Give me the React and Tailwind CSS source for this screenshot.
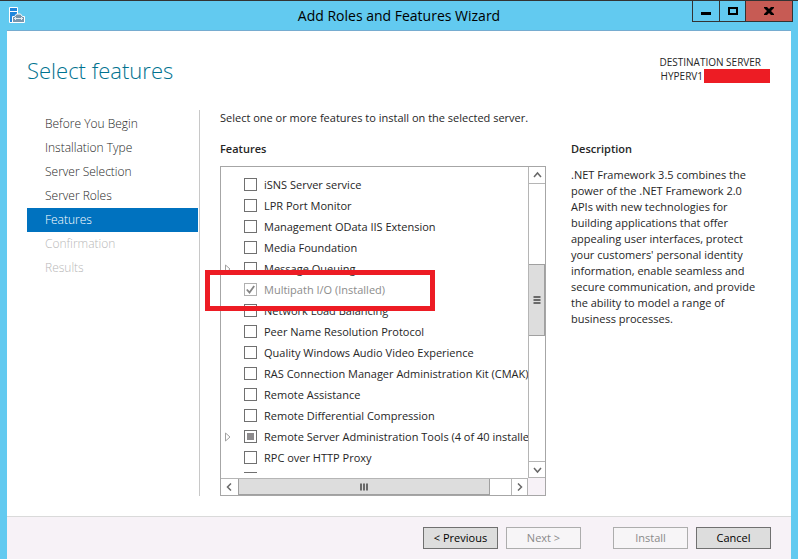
import { useState } from "react";

const STEPS = [
  { name: "Before You Begin" },
  { name: "Installation Type" },
  { name: "Server Selection" },
  { name: "Server Roles" },
  { name: "Features", current: true },
  { name: "Confirmation", disabled: true },
  { name: "Results", disabled: true },
];

const FEATURES = [
  { name: "iSNS Server service" },
  { name: "LPR Port Monitor" },
  { name: "Management OData IIS Extension" },
  { name: "Media Foundation" },
  { name: "Message Queuing", expandable: true },
  { name: "Multipath I/O (Installed)", installed: true },
  { name: "Network Load Balancing" },
  { name: "Peer Name Resolution Protocol" },
  { name: "Quality Windows Audio Video Experience" },
  { name: "RAS Connection Manager Administration Kit (CMAK)" },
  { name: "Remote Assistance" },
  { name: "Remote Differential Compression" },
  {
    name: "Remote Server Administration Tools (4 of 40 installed)",
    expandable: true,
    partial: true,
  },
  { name: "RPC over HTTP Proxy" },
  { name: "Simple TCP/IP Services" },
];

export default function App() {
  return (
    <div className="flex min-h-screen flex-col border-t border-[#333333] bg-[#62caf0] font-['Open_Sans',sans-serif] text-[11px] leading-4 text-[#262626]">
      <TitleBar />
      <div className="mx-[7px] flex flex-1 flex-col border-t border-[#76acd0] bg-white">
        <header className="flex items-start justify-between pt-[23px] pr-[30px] pl-5">
          <h1 className="text-[22px] leading-8 font-light text-[#00728f]">
            Select features
          </h1>
          <div className="pt-px text-right text-[10px] leading-[14px]">
            <p>DESTINATION SERVER</p>
            <p className="relative pr-[58px]">
              HYPERV1
              <span className="absolute top-0 -right-[9px] h-3.5 w-[66px] bg-[#ed1c24]" />
            </p>
          </div>
        </header>

        <main className="flex flex-1 pt-6 pr-5 pb-5 pl-5">
          <StepList />
          <section className="w-[347px] shrink-0 border-l border-[#c8c8c8] pl-5">
            <p className="whitespace-nowrap">
              Select one or more features to install on the selected server.
            </p>
            <h2 className="mt-[15px] mb-[9px] font-semibold">Features</h2>
            <FeatureTree />
          </section>
          <section className="min-w-0 flex-1 pt-[31px] pr-1.5 pl-[25px]">
            <h2 className="font-semibold">Description</h2>
            <p className="mt-[10px]">
              .NET Framework 3.5 combines the power of the .NET Framework 2.0
              APIs with new technologies for building applications that offer
              appealing user interfaces, protect your customers' personal
              identity information, enable seamless and secure communication,
              and provide the ability to model a range of business processes.
            </p>
          </section>
        </main>

        <footer className="flex justify-end gap-8 border-t border-[#dadada] bg-[#f7f2f7] px-5 py-[10px]">
          <div className="flex gap-2">
            <WizardButton>&lt; Previous</WizardButton>
            <WizardButton disabled>Next &gt;</WizardButton>
          </div>
          <div className="flex gap-2">
            <WizardButton disabled>Install</WizardButton>
            <WizardButton>Cancel</WizardButton>
          </div>
        </footer>
      </div>
    </div>
  );
}

function TitleBar() {
  return (
    <div className="grid h-[29px] grid-cols-[1fr_auto_1fr] items-start px-[5px]">
      <ServerIcon />
      <span className="text-sm leading-[29px] text-black">
        Add Roles and Features Wizard
      </span>
      <div className="flex h-[21px] justify-self-end border border-t-0 border-[#333333]">
        <button
          type="button"
          aria-label="Minimize"
          className="grid w-[27px] place-items-center border-r border-[#333333]"
        >
          <svg width="10" height="10" viewBox="0 0 10 10">
            <path d="M0 6h10v3H0z" />
          </svg>
        </button>
        <button
          type="button"
          aria-label="Maximize"
          className="grid w-[26px] place-items-center border-r border-[#333333]"
        >
          <svg width="10" height="8" viewBox="0 0 10 8" fill="none">
            <path d="M1 1h8v6H1z" stroke="#000" strokeWidth="2" />
          </svg>
        </button>
        <button
          type="button"
          aria-label="Close"
          className="grid w-[46px] place-items-center bg-[#c75b54]"
        >
          <svg width="10" height="8" viewBox="0 0 10 8">
            <path d="M0 0h3l2 2 2-2h3v1L7 4l3 3v1H7L5 6 3 8H0V7l3-3-3-3z" />
          </svg>
        </button>
      </div>
    </div>
  );
}

function StepList() {
  return (
    <nav className="w-[172px] shrink-0 pt-0.5 pr-px">
      {STEPS.map((step) => (
        <a
          key={step.name}
          href="#"
          aria-current={step.current ? "step" : undefined}
          aria-disabled={step.disabled}
          className={
            step.current
              ? "block bg-[#0072bf] pl-[18px] text-xs leading-6 font-light text-white"
              : step.disabled
                ? "block pl-[18px] text-xs leading-6 font-light text-[#b8b8b8]"
                : "block pl-[18px] text-xs leading-6 font-light"
          }
        >
          {step.name}
        </a>
      ))}
    </nav>
  );
}

function FeatureTree() {
  return (
    <div className="relative grid grid-cols-[minmax(0,1fr)_17px] border border-[#a6a6a6]">
      <ul className="h-[311px] overflow-hidden border-b-[5px] border-white pt-[7px]">
        {FEATURES.map((feature) => (
          <FeatureRow key={feature.name} feature={feature} />
        ))}
      </ul>

      <div className="flex flex-col border-l border-[#b5b5b5]">
        <ScrollButton label="Scroll up" className="h-[17px] border-b">
          <path d="M1 6l3.5-4L8 6" />
        </ScrollButton>
        <div className="h-20" />
        <div className="grid h-[72px] place-items-center border border-l-0 border-[#a0a0a0] bg-[#dddddd]">
          <Grip />
        </div>
        <div className="flex-1" />
        <ScrollButton label="Scroll down" className="h-[17px] border-y">
          <path d="M1 2l3.5 4L8 2" />
        </ScrollButton>
      </div>

      <div className="flex h-[17px] border-t border-[#b5b5b5]">
        <ScrollButton label="Scroll left" className="w-[17px]">
          <path d="M6 0.5L2.5 4 6 7.5" />
        </ScrollButton>
        <div className="grid w-[252px] place-items-center border border-t-0 border-[#a0a0a0] bg-[#dddddd]">
          <Grip vertical />
        </div>
        <div className="flex-1" />
        <ScrollButton label="Scroll right" className="w-[17px] border-x">
          <path d="M3 0.5L6.5 4 3 7.5" />
        </ScrollButton>
      </div>
      <div className="bg-[#f7f2f7]" />

      {/* callout around the installed feature */}
      <div className="pointer-events-none absolute top-[103px] -left-4 h-[41px] w-[230px] border-5 border-[#ed1c24]" />
    </div>
  );
}

function FeatureRow({ feature }) {
  const [checked, setChecked] = useState(Boolean(feature.installed));

  return (
    <li className="flex h-[21px] items-center pl-1">
      <span className="w-[19px] shrink-0">
        {feature.expandable && (
          <button
            type="button"
            aria-label={`Expand ${feature.name}`}
            className="block"
          >
            <svg width="6" height="10" viewBox="0 0 6 10" fill="none">
              <path d="M0.5 1v8l4.5-4z" stroke="#a0a0a0" />
            </svg>
          </button>
        )}
      </span>
      <label
        className={
          feature.installed
            ? "flex items-center gap-[7px] whitespace-nowrap text-[#8c8c8c]"
            : "flex items-center gap-[7px] whitespace-nowrap"
        }
      >
        <span className="grid shrink-0 place-items-center">
          <input
            type="checkbox"
            checked={checked}
            disabled={feature.installed}
            onChange={(e) => setChecked(e.target.checked)}
            className="col-start-1 row-start-1 size-[13px] appearance-none border border-[#707070] bg-white disabled:border-[#b0b0b0]"
          />
          {feature.partial && !checked && (
            <span className="pointer-events-none col-start-1 row-start-1 size-[7px] bg-[#8c8a8c]" />
          )}
          {checked && (
            <svg
              className="pointer-events-none col-start-1 row-start-1"
              width="9"
              height="9"
              viewBox="0 0 9 9"
              fill="none"
            >
              <path d="M0.8 4.5l2.7 3L8.2 1" stroke="#858585" strokeWidth="1.8" />
            </svg>
          )}
        </span>
        {feature.name}
      </label>
    </li>
  );
}

function ScrollButton({ label, className, children }) {
  return (
    <button
      type="button"
      aria-label={label}
      className={`grid shrink-0 place-items-center border-[#b5b5b5] bg-white ${className}`}
    >
      <svg
        width="9"
        height="8"
        viewBox="0 0 9 8"
        fill="none"
        stroke="#686868"
        strokeWidth="1.5"
      >
        {children}
      </svg>
    </button>
  );
}

function Grip({ vertical }) {
  return (
    <svg width="8" height="8" viewBox="0 0 8 8" fill="#6a6a6a">
      <path
        d={
          vertical
            ? "M0 0.5h2v7H0zM3 0.5h2v7H3zM6 0.5h2v7H6z"
            : "M0.5 0h7v2h-7zM0.5 3h7v2h-7zM0.5 6h7v2h-7z"
        }
      />
    </svg>
  );
}

function WizardButton({ children, disabled }) {
  return (
    <button
      type="button"
      disabled={disabled}
      className="h-[22px] w-[75px] border border-[#707070] bg-[#dddddd] text-black disabled:border-[#adadad] disabled:bg-[#f7f5f7] disabled:text-[#8a8a8a]"
    >
      {children}
    </button>
  );
}

function ServerIcon() {
  return (
    <svg
      className="mt-1.5 ml-1"
      width="16"
      height="16"
      viewBox="0 0 16 16"
      fill="none"
    >
      <path d="M0.5 0.5h8v15h-8z" fill="#1e86dc" stroke="#fff" />
      <path d="M1 4.5h7" stroke="#fff" />
      <path
        d="M3.5 15.5V9.5h2l2-2.5h4l2 2.5h2v6z"
        fill="#7896ad"
        stroke="#fff"
      />
      <path d="M5 11.5h9M6.5 10v3M12.5 10v3" stroke="#e4edf3" />
    </svg>
  );
}
